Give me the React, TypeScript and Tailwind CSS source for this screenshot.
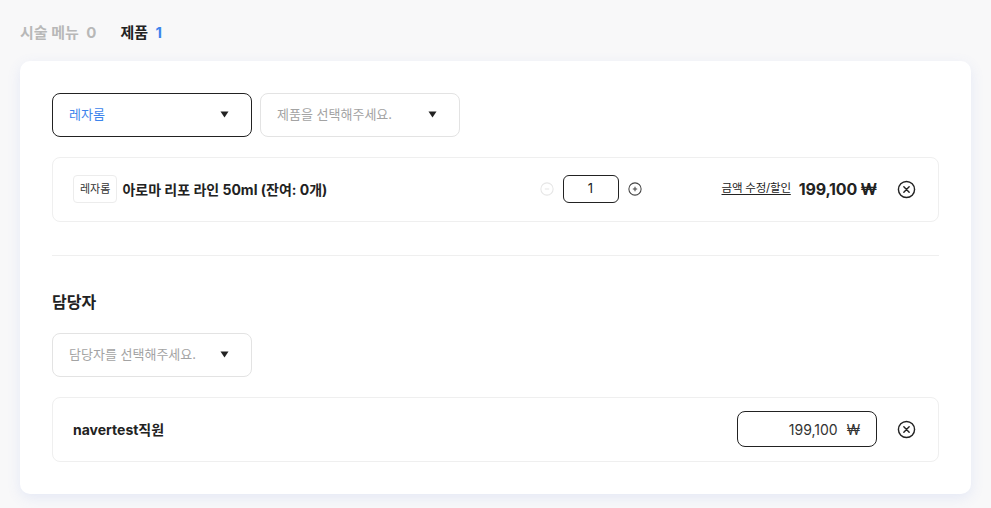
import React from "react";

function Caret() {
  return (
    <svg width="9" height="7" viewBox="0 0 9 7" className="shrink-0">
      <path d="M0.5 0.5h8L4.5 6.5z" fill="#222" />
    </svg>
  );
}

function CircleX() {
  return (
    <svg width="19" height="19" viewBox="0 0 20 20" fill="none" stroke="#222" strokeWidth="1.5" strokeLinecap="round">
      <circle cx="10" cy="10" r="8.5" />
      <path d="M7.2 7.2l5.6 5.6M12.8 7.2l-5.6 5.6" />
    </svg>
  );
}

function Select({ label, placeholder, active }: { label: string; placeholder?: boolean; active?: boolean }) {
  return (
    <div
      className={`flex h-[44px] w-[200px] items-center justify-between rounded-lg border bg-white pl-4 pr-[22px] text-[13px] ${
        active ? "border-[#222]" : "border-[#e3e3e3]"
      }`}
    >
      <span className={placeholder ? "text-[#a3a3a3]" : "text-[#3d84ec]"}>{label}</span>
      <Caret />
    </div>
  );
}

export default function App() {
  return (
    <div
      className="min-h-screen bg-[#f8f8f9] px-5 pt-[22px] pb-4 text-[#222]"
      style={{ fontFamily: 'Inter, "Noto Sans CJK KR", sans-serif' }}
    >
      {/* tabs */}
      <div className="flex items-center gap-6 text-[15px] font-bold">
        <span className="text-[#b8b8b8]">
          시술 메뉴 <span className="ml-1">0</span>
        </span>
        <span>
          제품 <span className="ml-1 text-[#3d84ec]">1</span>
        </span>
      </div>

      <div className="mt-[16px] rounded-[10px] bg-white px-8 py-8 shadow-[0_4px_14px_rgba(90,120,220,0.12)]">
        <div className="flex gap-2">
          <Select label="레자롬" active />
          <Select label="제품을 선택해주세요." placeholder />
        </div>

        {/* product row */}
        <div className="mt-5 flex h-[65px] items-center rounded-lg border border-[#efefef] pl-5 pr-[22px]">
          <span className="flex h-[28px] items-center rounded border border-[#ececec] px-[6px] text-[11px] text-[#333]">
            레자롬
          </span>
          <span className="ml-[5px] flex-1 text-[14px] font-bold">아로마 리포 라인 50ml (잔여: 0개)</span>

          <div className="flex items-center gap-[9px]">
            <svg width="14" height="14" viewBox="0 0 16 16" fill="none" stroke="#e6e6e6" strokeWidth="1.2">
              <circle cx="8" cy="8" r="7" />
              <path d="M5.5 8h5" />
            </svg>
            <div className="flex h-[28px] w-[56px] items-center justify-center rounded-md border border-[#222] text-[13px]">
              1
            </div>
            <svg width="14" height="14" viewBox="0 0 16 16" fill="none" stroke="#444" strokeWidth="1.2">
              <circle cx="8" cy="8" r="7" />
              <path d="M8 5.5v5M5.5 8h5" />
            </svg>
          </div>

          <span className="ml-[80px] text-[11.5px] tracking-[-0.2px] underline underline-offset-2">금액 수정/할인</span>
          <span className="ml-2 text-[16px] font-bold tracking-[-0.2px]">199,100 ₩</span>
          <span className="ml-[20px] flex">
            <CircleX />
          </span>
        </div>

        <div className="mt-[33px] h-px bg-[#efefef]" />

        <h3 className="mt-[34px] text-[16px] font-bold">담당자</h3>

        <div className="mt-[19px]">
          <Select label="담당자를 선택해주세요." placeholder />
        </div>

        {/* staff row */}
        <div className="mt-5 flex h-[65px] items-center rounded-lg border border-[#efefef] pl-5 pr-[22px]">
          <span className="flex-1 text-[14px] font-bold">navertest직원</span>
          <div className="flex h-[36px] w-[140px] items-center justify-end gap-[9px] rounded-lg border border-[#222] pr-4 text-[14px] text-[#333]">
            <span>199,100</span>
            <span>₩</span>
          </div>
          <span className="ml-[20px] flex">
            <CircleX />
          </span>
        </div>
      </div>
    </div>
  );
}
